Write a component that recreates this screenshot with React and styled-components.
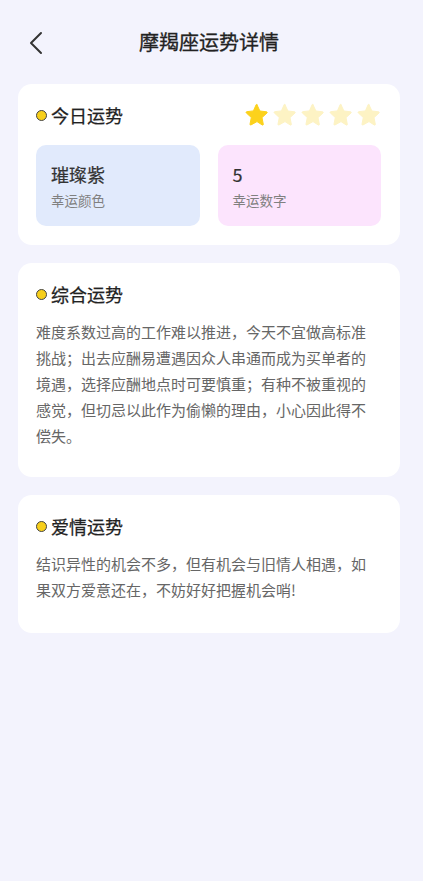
import React from 'react';
import styled, { createGlobalStyle } from 'styled-components';

const GlobalStyle = createGlobalStyle`
  html, body {
    margin: 0;
    padding: 0;
    background: #f3f3fd;
  }
  body {
    font-family: "Noto Sans CJK SC", "Noto Sans", sans-serif;
    color: #333;
  }
`;

const Page = styled.div`
  min-height: 881px;
  padding: 0 23px 30px 18px;
  box-sizing: border-box;
  background: #f3f3fd;
`;

const Header = styled.div`
  position: relative;
  height: 84px;
  display: flex;
  align-items: center;
  justify-content: center;
  padding-bottom: 1px;
  box-sizing: border-box;
`;

const BackButton = styled.button`
  position: absolute;
  left: 6px;
  top: 31px;
  width: 24px;
  height: 24px;
  padding: 0;
  border: none;
  background: none;
  display: flex;
  align-items: center;
  justify-content: center;
`;

const Title = styled.h1`
  margin: 0;
  font-size: 20px;
  font-weight: 400;
  color: #222;
  line-height: 1;
  -webkit-text-stroke: 0.3px #222;
`;

const Card = styled.section`
  background: #fff;
  border-radius: 14px;
  padding: 18px 22px ${p => p.$bottom || 27}px 18px;
  margin-bottom: 18px;
  box-sizing: border-box;
`;

const CardHead = styled.div`
  display: flex;
  align-items: center;
  justify-content: space-between;
  height: 26px;
`;

const SectionTitle = styled.h2`
  display: flex;
  align-items: center;
  margin: 0;
  font-size: 18px;
  font-weight: 400;
  color: #222;
  line-height: 26px;
  -webkit-text-stroke: 0.25px #222;
`;

const Dot = styled.span`
  width: 9px;
  height: 9px;
  border-radius: 50%;
  background: #f7cf1b;
  border: 1.5px solid #444;
  margin-right: 4px;
  flex-shrink: 0;
`;

const Stars = styled.div`
  display: flex;
  gap: 4px;
  margin-right: -3px;
`;

const InfoGrid = styled.div`
  display: grid;
  grid-template-columns: 1fr 1fr;
  gap: 18px;
  margin-top: 17px;
  margin-right: -3px;
`;

const InfoBox = styled.div`
  height: 81px;
  border-radius: 10px;
  background: ${p => p.$bg};
  padding: 16px 15px 0;
  box-sizing: border-box;
`;

const InfoValue = styled.div`
  font-size: 18px;
  font-weight: 400;
  color: #333;
  line-height: 26px;
  -webkit-text-stroke: 0.2px #333;
`;

const InfoLabel = styled.div`
  margin-top: 3px;
  font-size: 13.5px;
  color: #808080;
  line-height: 20px;
`;

const Body = styled.p`
  margin: 12px 0 0;
  font-size: 15px;
  line-height: 26px;
  color: #666;
`;

function Star({ filled }) {
  return (
    <svg width="24" height="24" viewBox="0 0 24 24">
      <path
        d="M12 1.8l2.9 6.2 6.7.8c.6.1.8.8.4 1.2l-5 4.6 1.3 6.7c.1.6-.5 1-1 .7L12 18.6 6 21.9c-.5.3-1.1-.1-1-.7l1.3-6.7-5-4.6c-.4-.4-.2-1.1.4-1.2l6.7-.8L11.1 1.8c.2-.5 1-.5 1.2 0z"
        fill={filled ? '#fcd21c' : '#fdf3c4'}
        stroke={filled ? '#fcd21c' : '#fdf3c4'}
        strokeWidth="1"
        strokeLinejoin="round"
      />
    </svg>
  );
}

export default function App() {
  const rating = 1;
  return (
    <>
      <GlobalStyle />
      <Page>
        <Header>
          <BackButton aria-label="返回">
            <svg width="16" height="24" viewBox="0 0 16 24">
              <path d="M13 2 L3 12 L13 22" fill="none" stroke="#333" strokeWidth="2" strokeLinecap="round" strokeLinejoin="round" />
            </svg>
          </BackButton>
          <Title>摩羯座运势详情</Title>
        </Header>

        <Card $bottom={19}>
          <CardHead>
            <SectionTitle><Dot />今日运势</SectionTitle>
            <Stars>
              {[0, 1, 2, 3, 4].map(i => <Star key={i} filled={i < rating} />)}
            </Stars>
          </CardHead>
          <InfoGrid>
            <InfoBox $bg="#e1eafc">
              <InfoValue>璀璨紫</InfoValue>
              <InfoLabel>幸运颜色</InfoLabel>
            </InfoBox>
            <InfoBox $bg="#fce4fd">
              <InfoValue>5</InfoValue>
              <InfoLabel>幸运数字</InfoLabel>
            </InfoBox>
          </InfoGrid>
        </Card>

        <Card $bottom={28}>
          <CardHead>
            <SectionTitle><Dot />综合运势</SectionTitle>
          </CardHead>
          <Body>
            难度系数过高的工作难以推进，今天不宜做高标准挑战；出去应酬易遭遇因众人串通而成为买单者的境遇，选择应酬地点时可要慎重；有种不被重视的感觉，但切忌以此作为偷懒的理由，小心因此得不偿失。
          </Body>
        </Card>

        <Card $bottom={30}>
          <CardHead>
            <SectionTitle><Dot />爱情运势</SectionTitle>
          </CardHead>
          <Body>
            结识异性的机会不多，但有机会与旧情人相遇，如果双方爱意还在，不妨好好把握机会哨!
          </Body>
        </Card>
      </Page>
    </>
  );
}
